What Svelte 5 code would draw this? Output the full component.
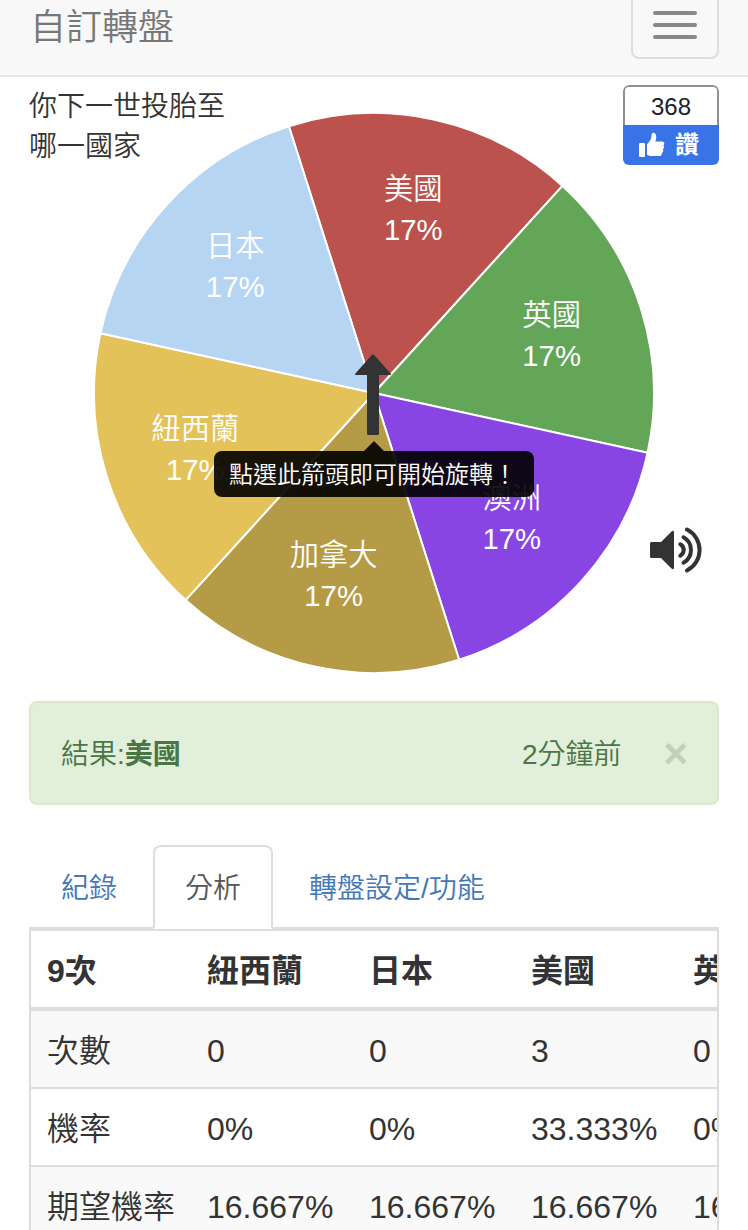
<script>
  const CENTER_X = 345;
  const CENTER_Y = 316;
  const RADIUS = 280;
  const LABEL_RADIUS = 187;
  const START = -107.7;

  let showHint = $state(true);
  let showResult = $state(true);
  let activeTab = $state('分析');

  const tabs = ['紀錄', '分析', '轉盤設定/功能'];

  const options = [
    { name: '美國', color: '#bb524e' },
    { name: '英國', color: '#64a658' },
    { name: '澳洲', color: '#8845e3' },
    { name: '加拿大', color: '#b59b45' },
    { name: '紐西蘭', color: '#e4c25a' },
    { name: '日本', color: '#b6d5f3' },
  ];

  const head = ['9次', '紐西蘭', '日本', '美國', '英國'];
  const rows = [
    ['次數', '0', '0', '3', '0'],
    ['機率', '0%', '0%', '33.333%', '0%'],
    ['期望機率', '16.667%', '16.667%', '16.667%', '16.667%'],
  ];

  function point(angle, r) {
    const rad = (angle * Math.PI) / 180;
    return { x: CENTER_X + r * Math.cos(rad), y: CENTER_Y + r * Math.sin(rad) };
  }

  const step = 360 / options.length;
  const slices = options.map((option, i) => {
    const from = point(START + i * step, RADIUS);
    const to = point(START + (i + 1) * step, RADIUS);
    return {
      ...option,
      label: point(START + (i + 0.5) * step, LABEL_RADIUS),
      path: `M${CENTER_X} ${CENTER_Y}L${from.x} ${from.y}A${RADIUS} ${RADIUS} 0 0 1 ${to.x} ${to.y}Z`,
    };
  });
</script>

<div class="page">
  <nav class="navbar">
    <span class="brand">自訂轉盤</span>
    <button class="toggle" aria-label="選單">
      <span class="bar"></span>
      <span class="bar"></span>
      <span class="bar"></span>
    </button>
  </nav>

  <main class="container">
    <section class="stage">
      <svg class="wheel" width="690" height="624" viewBox="0 0 690 624">
        {#each slices as slice}
          <path d={slice.path} fill={slice.color} stroke="#fff" stroke-width="2" />
        {/each}
        {#each slices as slice}
          <text x={slice.label.x - 0.5} y={slice.label.y - 11}>{slice.name}</text>
          <text x={slice.label.x - 0.5} y={slice.label.y + 30}>17%</text>
        {/each}
      </svg>

      <div class="title">你下一世投胎至哪一國家</div>

      <div class="like">
        <div class="like-count">368</div>
        <div class="like-button">
          <svg width="26" height="26" viewBox="0 0 26 26" fill="#fff">
            <rect x="0" y="11" width="6" height="14" rx="1.2" />
            <path d="M8 12.2C11 9.5 12.4 6.6 12.7 2.4C12.9.2 16.3 0 17.1 3.3C17.6 5.5 17 7.7 16.3 9.6H23.2C25.6 9.6 26 12.7 24.2 13.5C25.6 14.5 25.3 16.7 23.7 17.3C24.8 18.4 24.3 20.4 22.8 20.9C23.4 22.4 22.3 24 20.4 24H13C10.8 24 9.6 23.5 8 22.7Z" />
          </svg>
          <span>讚</span>
        </div>
      </div>

      <button class="spin" aria-label="旋轉" onclick={() => (showHint = false)}>
        <svg width="36" height="82" viewBox="0 0 36 82" fill="#333">
          <path d="M17 .8Q18 0 19 .8L35.6 19.5Q36.4 21 35 21H24V79.5Q24 81 22.5 81H13.5Q12 81 12 79.5V21H1Q-.4 21 .4 19.5Z" />
        </svg>
      </button>

      {#if showHint}
        <div class="tooltip">點選此箭頭即可開始旋轉！</div>
      {/if}

      <button class="volume" aria-label="音效">
        <svg width="54" height="46" viewBox="0 0 54 46" fill="none">
          <path d="M1.5 15H11L21.5 4.5Q24 2.5 24 5.5V40.5Q24 43.5 21.500 41.5L11 31H1.500Q0 31 0 29.5V16.5Q0 15 1.5 15Z" fill="#333" />
          <g stroke="#333" stroke-width="4" stroke-linecap="round">
            <path d="M30.300 17.3A6.5 6.5 0 0 1 30.3 28.7" />
            <path d="M33.500 10.3A14.5 14.5 0 0 1 33.5 35.7" />
            <path d="M37 2.5A23 23 0 0 1 37 43.5" />
          </g>
        </svg>
      </button>
    </section>

    {#if showResult}
      <div class="alert">
        <span>結果:<strong>美國</strong></span>
        <span class="time">2分鐘前</span>
        <button class="close" aria-label="關閉" onclick={() => (showResult = false)}>×</button>
      </div>
    {/if}

    <ul class="tabs">
      {#each tabs as tab}
        <li>
          <button class="tab" class:active={tab === activeTab} onclick={() => (activeTab = tab)}>{tab}</button>
        </li>
      {/each}
    </ul>

    <div class="table-wrap">
      <table>
        <thead>
          <tr>
            {#each head as cell}
              <th>{cell}</th>
            {/each}
          </tr>
        </thead>
        <tbody>
          {#each rows as row}
            <tr>
              {#each row as cell}
                <td>{cell}</td>
              {/each}
            </tr>
          {/each}
        </tbody>
      </table>
    </div>
  </main>
</div>

<style>
  :global(body) {
    margin: 0;
    background: #fefefe;
  }

  .page {
    height: 1230px;
    overflow: hidden;
    box-sizing: border-box;
    font-family: 'Liberation Sans', 'Noto Sans CJK TC', sans-serif;
    font-size: 28px;
    font-weight: 350;
    line-height: 40px;
    color: #333;
  }

  button {
    font: inherit;
    color: inherit;
    background: none;
    border: 0;
    padding: 0;
    cursor: pointer;
  }

  .navbar {
    display: flex;
    justify-content: space-between;
    align-items: flex-end;
    box-sizing: border-box;
    height: 77px;
    padding: 0 29px 16px 30px;
    background: #f8f8f8;
    border-bottom: 2px solid #e7e7e7;
    overflow: hidden;
  }

  .brand {
    font-size: 36px;
    color: #777;
    padding-bottom: 11px;
  }

  .toggle {
    display: flex;
    flex-direction: column;
    justify-content: center;
    align-items: center;
    gap: 8px;
    flex-shrink: 0;
    box-sizing: border-box;
    width: 88px;
    height: 68px;
    border: 2px solid #ddd;
    border-radius: 8px;
  }

  .bar {
    width: 44px;
    height: 4px;
    border-radius: 2px;
    background: #888;
  }

  .container {
    width: 690px;
    margin: 0 auto;
  }

  .stage {
    position: relative;
    display: grid;
    height: 624px;
  }

  .wheel,
  .title,
  .like {
    grid-area: 1 / 1;
  }

  .wheel text {
    font-size: 29.3px;
    fill: #fff;
    text-anchor: middle;
  }

  .title {
    width: 200px;
    margin-top: 10px;
  }

  .like {
    justify-self: end;
    box-sizing: border-box;
    width: 96px;
    height: 80px;
    margin-top: 8px;
    border-radius: 6px;
    overflow: hidden;
    font-size: 24px;
    background: #fff;
  }

  .like-count {
    box-sizing: border-box;
    height: 40px;
    border: 2px solid #8d9097;
    border-bottom: 0;
    border-radius: 6px 6px 0 0;
    text-align: center;
    color: #1d2129;
  }

  .like-button {
    display: flex;
    align-items: center;
    gap: 10px;
    height: 40px;
    padding-left: 16px;
    background: #3874e7;
    color: #fff;
    font-weight: 700;
  }

  .spin {
    position: absolute;
    left: 326px;
    top: 277px;
    line-height: 0;
  }

  .tooltip {
    position: absolute;
    left: 185px;
    top: 374px;
    width: 320px;
    height: 46px;
    box-sizing: border-box;
    padding: 1px 0 0 15px;
    border-radius: 8px;
    background: rgba(0, 0, 0, 0.9);
    color: #fff;
    font-size: 24px;
    line-height: 46px;
    white-space: nowrap;
  }

  .tooltip::before {
    content: '';
    position: absolute;
    left: 150px;
    top: -10px;
    border: 10px solid transparent;
    border-top: 0;
    border-bottom-color: rgba(0, 0, 0, 0.9);
  }

  .volume {
    position: absolute;
    left: 621px;
    top: 450px;
    line-height: 0;
  }

  .alert {
    display: flex;
    align-items: center;
    box-sizing: border-box;
    height: 104px;
    padding: 3px 29px 0 30px;
    border: 2px solid #d9e9c9;
    border-radius: 8px;
    background: #e2efda;
    color: #4a7545;
  }

  .alert strong {
    font-weight: 700;
  }

  .time {
    margin-left: auto;
  }

  .close {
    margin-left: 42px;
    padding-bottom: 1px;
    font-size: 42px;
    font-weight: 700;
    color: #bfd2b9;
    line-height: 40px;
  }

  .tabs {
    display: flex;
    gap: 4px;
    margin: 40px 0 0;
    padding: 0;
    list-style: none;
    border-bottom: 2px solid #ddd;
  }

  .tabs li {
    margin-bottom: -2px;
  }

  .tab {
    display: block;
    box-sizing: border-box;
    height: 84px;
    padding: 4px 30px 0;
    border: 2px solid transparent;
    border-radius: 8px 8px 0 0;
    color: #4478b5;
  }

  .tab.active {
    border-color: #ddd;
    border-bottom-color: transparent;
    background: #fefefe;
    color: #555;
  }

  .table-wrap {
    box-sizing: border-box;
    height: 400px;
    border: 2px solid #ddd;
    overflow: hidden;
  }

  table {
    width: 808px;
    table-layout: fixed;
    border-collapse: separate;
    border-spacing: 0;
    font-size: 32px;
    line-height: 44px;
  }

  th,
  td {
    box-sizing: border-box;
    width: 162px;
    height: 78px;
    padding: 3px 16px 0;
    text-align: left;
    white-space: nowrap;
    border-top: 2px solid #ddd;
  }

  th:first-child,
  td:first-child {
    width: 160px;
  }

  th {
    height: 80px;
    border-top: 0;
    border-bottom: 4px solid #ddd;
    font-weight: 700;
  }

  tbody tr:first-child td {
    height: 76px;
    border-top: 0;
  }

  tbody tr:nth-child(odd) {
    background: #f9f9f9;
  }
</style>
